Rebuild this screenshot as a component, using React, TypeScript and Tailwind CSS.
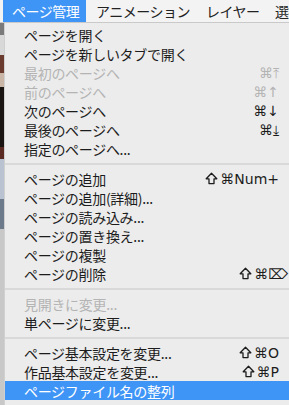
import React from 'react';

type Item =
  | { kind: 'item'; label: string; shift?: boolean; keys?: string; disabled?: boolean; active?: boolean; wide?: boolean }
  | { kind: 'sep' };

const items: Item[] = [
  { kind: 'item', label: 'ページを開く' },
  { kind: 'item', label: 'ページを新しいタブで開く' },
  { kind: 'item', label: '最初のページへ', keys: '⌘⤒', disabled: true },
  { kind: 'item', label: '前のページへ', keys: '⌘↑', disabled: true },
  { kind: 'item', label: '次のページへ', keys: '⌘↓' },
  { kind: 'item', label: '最後のページへ', keys: '⌘⤓' },
  { kind: 'item', label: '指定のページへ...' },
  { kind: 'sep' },
  { kind: 'item', label: 'ページの追加', shift: true, keys: '⌘Num+' },
  { kind: 'item', label: 'ページの追加(詳細)...' },
  { kind: 'item', label: 'ページの読み込み...' },
  { kind: 'item', label: 'ページの置き換え...' },
  { kind: 'item', label: 'ページの複製' },
  { kind: 'item', label: 'ページの削除', shift: true, keys: '⌘⌦', wide: true },
  { kind: 'sep' },
  { kind: 'item', label: '見開きに変更...', disabled: true },
  { kind: 'item', label: '単ページに変更...' },
  { kind: 'sep' },
  { kind: 'item', label: 'ページ基本設定を変更...', shift: true, keys: '⌘O' },
  { kind: 'item', label: '作品基本設定を変更...', shift: true, keys: '⌘P' },
  { kind: 'item', label: 'ページファイル名の整列', active: true },
];

const jp = "font-['Noto_Sans_CJK_JP',sans-serif]";
const sym = "font-['DejaVu_Sans','Liberation_Sans',sans-serif]";

const ShiftIcon = () => (
  <svg width="13" height="13" viewBox="0 0 13 13" className="mr-[2px]">
    <path d="M6.5 1.2 L11.8 6.8 H9 V11.6 H4 V6.8 H1.2 Z" fill="none" stroke="currentColor" strokeWidth="1.3" strokeLinejoin="round" />
  </svg>
);

const MenuRow: React.FC<{ item: Extract<Item, { kind: 'item' }> }> = ({ item }) => {
  const color = item.active ? 'text-white' : item.disabled ? 'text-[#b4b4b4]' : 'text-[#1c1c1c]';
  return (
    <div
      className={`flex h-[19px] items-center justify-between pl-[19px] ${item.wide ? 'pr-[1px]' : 'pr-[10px]'} ${
        item.active ? 'bg-[#3f95f6]' : ''
      } ${color}`}
    >
      <span className={`${jp} whitespace-nowrap text-[14px] leading-none tracking-[-0.3px]`}>{item.label}</span>
      {item.keys && (
        <span className={`${sym} flex items-center text-[14px] leading-none`}>
          {item.shift && <ShiftIcon />}
          {item.keys}
        </span>
      )}
    </div>
  );
};

export default function App() {
  return (
    <div className="flex h-[405px] w-[289px] flex-col overflow-hidden bg-[#ececec]">
      <div
        className={`flex h-[23px] shrink-0 items-center overflow-hidden whitespace-nowrap border-b border-[#c9c9c9] bg-[#f3f3f3] text-[14px] tracking-[-0.5px] text-[#222] ${jp}`}
      >
        <div className="ml-[3px] flex h-full w-[83px] shrink-0 items-center bg-[#3f95f6] pl-[9px] text-white">ページ管理</div>
        <div className="ml-[10px] w-[110px] shrink-0">アニメーション</div>
        <div className="w-[69px] shrink-0">レイヤー</div>
        <div className="shrink-0">選択</div>
      </div>
      <div className="flex flex-1">
        <div className="flex w-[4px] flex-col">
          <div className="h-[12px] bg-[#7a7a7a]" />
          <div className="h-[20px] bg-[#d8d8d8]" />
          <div className="h-[18px] bg-[#6b3a2e]" />
          <div className="h-[14px] bg-[#c9b6a6]" />
          <div className="h-[60px] bg-[#1a1412]" />
          <div className="h-[12px] bg-[#5b2a22]" />
          <div className="h-[40px] bg-[#b8c2d0]" />
          <div className="h-[30px] bg-[#6d7a8c]" />
          <div className="flex-1 bg-[#c8c8c8]" />
        </div>
        <div className="flex flex-1 flex-col border-l border-[#d0d0d0] pt-[2px]">
          {items.map((it, i) =>
            it.kind === 'sep' ? (
              <div key={i} className="flex h-[11px] items-center">
                <div className="h-[2px] w-full bg-[#d9d9d9]" />
              </div>
            ) : (
              <MenuRow key={i} item={it} />
            )
          )}
        </div>
      </div>
    </div>
  );
}
